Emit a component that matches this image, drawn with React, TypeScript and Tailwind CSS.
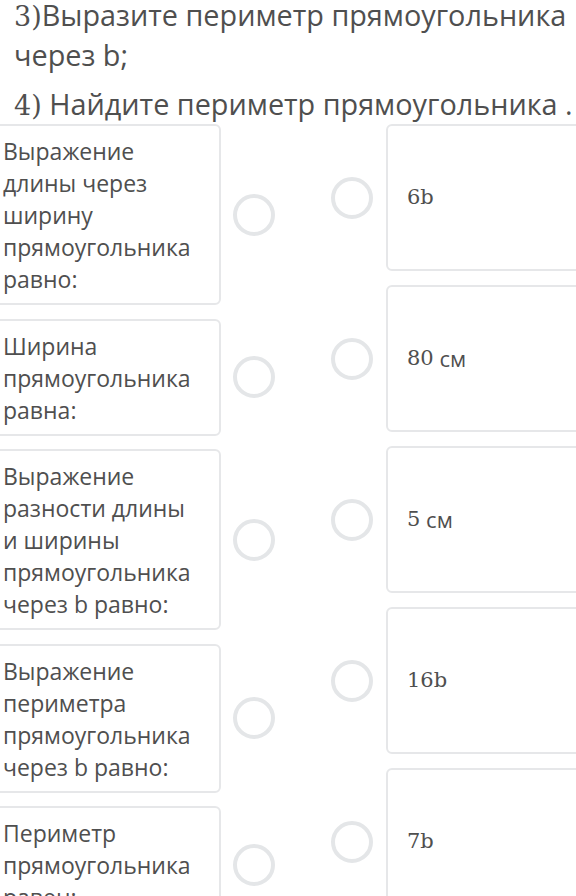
import React from 'react';

const leftItems = [
  ['Выражение', 'длины через', 'ширину', 'прямоугольника', 'равно:'],
  ['Ширина', 'прямоугольника', 'равна:'],
  ['Выражение', 'разности длины', 'и ширины', 'прямоугольника', 'через b равно:'],
  ['Выражение', 'периметра', 'прямоугольника', 'через b равно:'],
  ['Периметр', 'прямоугольника', 'равен:'],
];

const rightItems: [string, string][] = [
  ['6b', ''],
  ['80', ' см'],
  ['5', ' см'],
  ['16b', ''],
  ['7b', ''],
];

function Circle() {
  return <div className="h-[42px] w-[42px] shrink-0 rounded-full border-[4px] border-[#e4e6e8] bg-white" />;
}

export default function App() {
  return (
    <div className="h-[896px] w-[576px] overflow-hidden bg-white text-[#4f4f4f]" style={{ fontFamily: '"Open Sans", sans-serif' }}>
      <div className="-mt-[4px] whitespace-nowrap pl-[14px] text-[28.8px] leading-[38px]">
        <p>
          <span className="font-['DejaVu_Serif',serif] text-[27px]">3)</span>Выразите периметр прямоугольника
          <br />
          через b;
        </p>
        <p className="mt-[11px]">
          <span className="font-['DejaVu_Serif',serif] text-[27px]">4)</span> Найдите периметр прямоугольника .
        </p>
      </div>

      <div className="-mt-[1px] flex">
        <div className="-ml-[11px] flex w-[286px] shrink-0 flex-col gap-[13.5px]">
          {leftItems.map((lines, i) => (
            <div key={i} className="flex">
              <div className="w-[232px] shrink-0 rounded-[6px] border-2 border-[#e6e7e9] pt-[9px] pb-[8px] pl-[12px] text-[23px] leading-[32px]">
                {lines.map((l, j) => (
                  <div key={j} className="whitespace-nowrap">{l}</div>
                ))}
              </div>
              <div className="flex items-center pl-[12px]">
                <Circle />
              </div>
            </div>
          ))}
        </div>

        <div className="ml-[56px] flex flex-col gap-[14px]">
          {rightItems.map(([num, unit], i) => (
            <div key={i} className="flex items-center">
              <Circle />
              <div className="ml-[13px] flex h-[147px] w-[220px] shrink-0 items-center rounded-[6px] border-2 border-[#e6e7e9] pl-[19px] text-[21px]">
                <span className="font-['DejaVu_Serif',serif]">{num}</span>
                {unit && <span className="text-[22px]">&nbsp;{unit.trim()}</span>}
              </div>
            </div>
          ))}
        </div>
      </div>
    </div>
  );
}
